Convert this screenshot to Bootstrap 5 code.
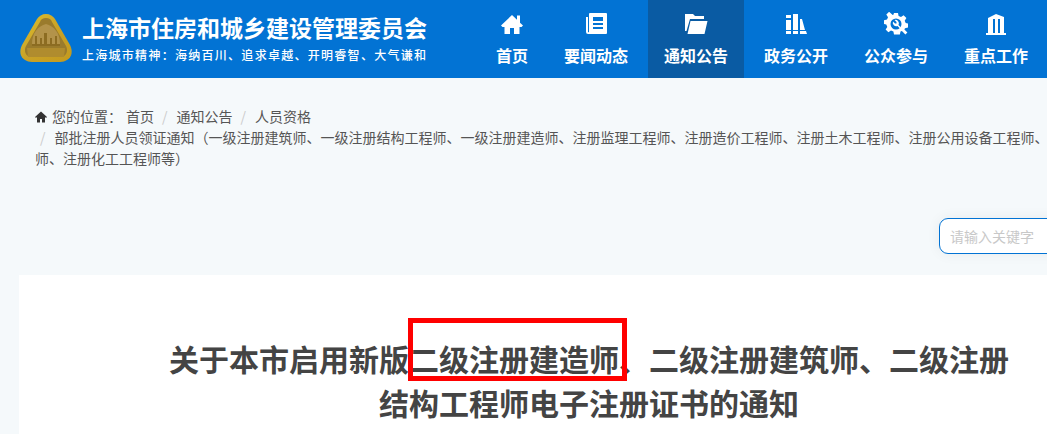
<!DOCTYPE html>
<html lang="zh-CN">
<head>
<meta charset="utf-8">
<title>上海市住房和城乡建设管理委员会</title>
<link rel="stylesheet" href="https://cdn.jsdelivr.net/npm/bootstrap@5.3.0/dist/css/bootstrap.min.css">
<style>
html,body{height:434px;overflow:hidden}
body{background:#f5f9fb;font-family:"Noto Sans CJK SC","Liberation Sans",sans-serif;color:#555;width:1047px}
.site-top{height:78px;background:#0273d4;color:#fff}
.logo-box{width:54px;height:52px;margin:12px 9px 0 19px}
.site-name{font-size:23px;font-weight:700;line-height:26px;white-space:nowrap;margin-top:14px}
.site-motto{font-size:12px;font-weight:500;letter-spacing:1.28px;line-height:16px;white-space:nowrap;margin-top:7px}
.main-menu{gap:4px;margin-right:3px}
.menu-link{display:flex;flex-direction:column;align-items:center;height:78px;padding:12px 16px 0;color:#fff;text-decoration:none;font-size:16px;font-weight:700;line-height:24px;white-space:nowrap}
.menu-link svg{width:24px;height:24px;display:block;margin-bottom:7px;fill:#fff}
.menu-link.is-on{background:#0a5ba3}
.content-wrap{width:1140px;margin-left:19px}
.crumbs{--bs-breadcrumb-divider-color:#ccc;--bs-breadcrumb-item-padding-x:0;--bs-breadcrumb-margin-bottom:0;width:1105px;margin-left:16px;padding-top:28px;font-size:14px;line-height:21px}
.crumbs .breadcrumb-item,.crumbs .breadcrumb-item a{color:#555;text-decoration:none}
.crumbs .breadcrumb-item+.breadcrumb-item::before{float:none;display:inline-block;padding:0 9px 0 5px;color:#ccc}
.crumbs .breadcrumb-item:not(.active)+.breadcrumb-item:not(.active){margin-left:3px}
.crumbs .where{margin-right:4px}
.crumbs svg{width:12px;height:12px;fill:#333;margin-right:5px;vertical-align:-1px}
.search-line{padding:49px 20px 21px 0}
.search-field{width:200px;height:36px;border:1px solid #0273d4;border-radius:9px;box-shadow:0 0 14px rgba(0,0,0,.06);padding:0 10px;font-size:14px;background:#fff;outline:0}
.search-field::placeholder{color:#c8c8c8}
.paper{background:#fff;padding-top:61px;height:170px}
.doc-title{width:860px;margin:0 0 0 140px;font-size:30px;font-weight:700;line-height:44px;color:#444;text-align:center;position:relative}
.mark-box{position:absolute;left:249px;top:-18px;width:219px;height:63px;border:5px solid #f00;pointer-events:none}
</style>
</head>
<body>
<header class="site-top d-flex justify-content-between">
  <div class="d-flex">
    <svg class="logo-box flex-shrink-0" viewBox="0 0 54 52">
      <defs>
        <linearGradient id="gd" x1="0" y1="0" x2="1" y2="1"><stop offset="0" stop-color="#e0c22e"/><stop offset=".5" stop-color="#c9a227"/><stop offset="1" stop-color="#c49a1e"/></linearGradient>
      </defs>
      <path d="M27 2c4 0 7 2 9 5l15 26c3 6 2 12-3 15-2 1-4 2-7 2H13c-3 0-5-1-7-2-5-3-6-9-3-15L18 7c2-3 5-5 9-5z" fill="url(#gd)"/>
      <path d="M27 6c3 0 5 1 6 4l14 24c2 4 1 8-2 10-2 1-3 1-5 1H14c-2 0-3 0-5-1-3-2-4-6-2-10L21 10c1-3 3-4 6-4z" fill="#9a7b2c"/>
      <path d="M27 12c8 2 14 9 14 20H13c0-11 6-18 14-20z" fill="#b3934a"/>
      <path d="M13 32h28v2H13zM16 24h2v8h-2zM25 21h3v11h-3zM36 24h2v8h-2zM21 26h2v6h-2zM31 26h2v6h-2z" fill="#8c6c22"/>
      <path d="M8 36h38l-1 9H9z" fill="#b08c2e"/>
    </svg>
    <div>
      <div class="site-name">上海市住房和城乡建设管理委员会</div>
      <div class="site-motto">上海城市精神：海纳百川、追求卓越、开明睿智、大气谦和</div>
    </div>
  </div>
  <nav class="main-menu d-flex">
    <a class="menu-link" href="#"><svg viewBox="0 0 24 24"><path d="M12 3 1 13.500l1.500 1.500H4.500v7H10v-6h4v6h5.500v-7H21.500l1.500-1.500-3-2.800V3.500h-3v4.300z"/></svg>首页</a>
    <a class="menu-link" href="#"><svg viewBox="0 0 24 24"><path fill-rule="evenodd" d="M6 1h16a1 1 0 0 1 1 1v19a1 1 0 0 1-1 1H4a2 2 0 0 1-2-2V5h2v15a.8.8 0 0 0 1 0V2a1 1 0 0 1 1-1zm3 4v4h10V5zm0 6v2h10v-2zm0 4v2h10v-2z"/></svg>要闻动态</a>
    <a class="menu-link is-on" href="#"><svg viewBox="0 0 24 24"><path d="M1 2h8l2 2h9v3H6L2.500 19H1zM6.500 9H23.500l-3 13H3.500z"/></svg>通知公告</a>
    <a class="menu-link" href="#"><svg viewBox="0 0 24 24"><path d="M2 3h5v3H2zM2 8h5v10H2zM2 19h5v3H2zM9 2h5v16H9zM9 19h5v3H9zM16 7h2l3 11h-5zM16 19h6l1 3h-7z"/></svg>政务公开</a>
    <a class="menu-link" href="#"><svg viewBox="0 0 24 24"><path fill-rule="evenodd" d="M10 1h4l.6 3 2.400 1 2.600-1.700 2.800 2.800-1.700 2.600 1 2.300 2.300.6v4l-3 .6-.6 1.300 3 3-2 2-3.500-3.500-1.400.6-.6 3H10l-.6-3-2.400-1-2.600 1.700-2.800-2.800 1.700-2.600-1-2.300-2.300-.6v-3.800l3-.6 1-2.400-1.700-2.600 2.800-2.800L8.700 3l.7-.3zM12 6.500a5.500 5.500 0 1 0 0 11 5.500 5.500 0 0 0 0-11z"/><path d="M9 9.500a3.500 3.500 0 0 0 4.500 4.500l2.500 2.500 1-1-2.500-2.500A3.500 3.500 0 0 0 10.500 8l2 2v1.500H11z"/></svg>公众参与</a>
    <a class="menu-link" href="#"><svg viewBox="0 0 24 24"><path fill-rule="evenodd" d="M4 6l8-4 8 3v16h2v2H2v-2h2zM9 7v14h2V7zm5 0v14h2V7z"/></svg>重点工作</a>
  </nav>
</header>
<div class="content-wrap">
  <ol class="breadcrumb crumbs">
    <li class="breadcrumb-item"><svg viewBox="0 0 24 24"><path d="M12 1 0 12l2 2 2-2v11h6v-7h4v7h6V12l2 2 2-2z"/></svg><span class="where">您的位置：</span><a href="#">首页</a></li>
    <li class="breadcrumb-item"><a href="#">通知公告</a></li>
    <li class="breadcrumb-item"><a href="#">人员资格</a></li>
    <li class="breadcrumb-item active">部批注册人员领证通知（一级注册建筑师、一级注册结构工程师、一级注册建造师、注册监理工程师、注册造价工程师、注册土木工程师、注册公用设备工程师、注册电气工程师、注册化工工程师等）</li>
  </ol>
  <div class="search-line d-flex justify-content-end">
    <input class="search-field" type="text" placeholder="请输入关键字">
  </div>
  <main class="paper">
    <h1 class="doc-title">关于本市启用新版二级注册建造师、二级注册建筑师、二级注册结构工程师电子注册证书的通知<span class="mark-box"></span></h1>
  </main>
</div>
</body>
</html>
